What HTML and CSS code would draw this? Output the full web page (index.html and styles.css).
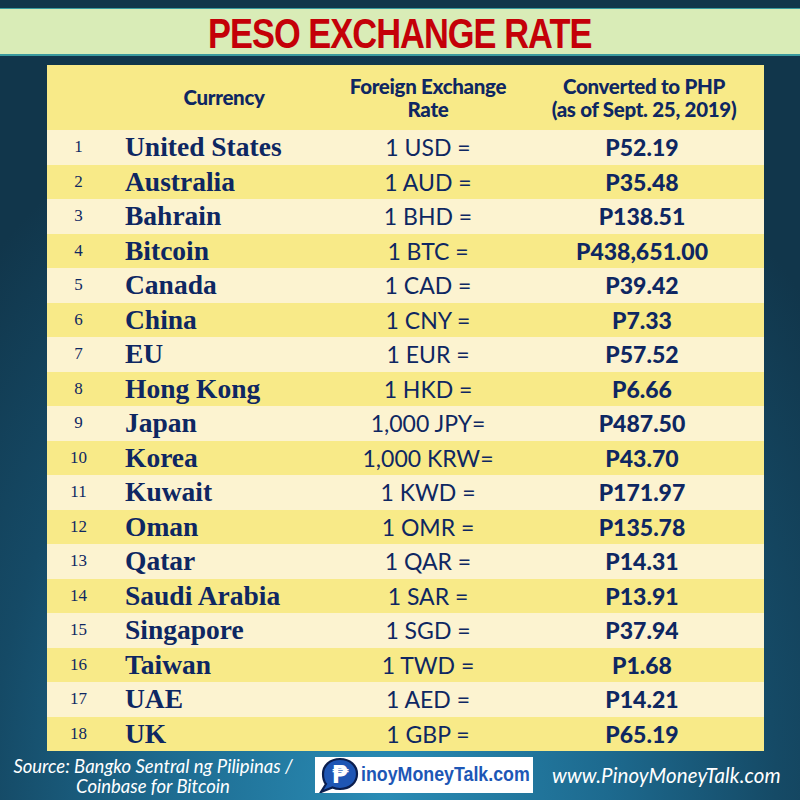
FILE: index.html
```html
<!DOCTYPE html>
<html>
<head>
<meta charset="utf-8">
<link rel="stylesheet" href="styles.css">
</head>
<body>
<div class="page">
  <header class="titlebar"><h1 class="title">PESO EXCHANGE RATE</h1></header>
  <section class="table">
    <div class="row head">
      <div class="hcell"></div>
      <div class="hcell">Currency</div>
      <div class="hcell">Foreign Exchange<br>Rate</div>
      <div class="hcell hphp">Converted to PHP<br>(as of Sept. 25, 2019)</div>
    </div>
    <div class="row light"><div class="c-num">1</div><div class="c-name">United States</div><div class="c-rate">1 USD =</div><div class="c-php">P52.19</div></div>
    <div class="row dark"><div class="c-num">2</div><div class="c-name">Australia</div><div class="c-rate">1 AUD =</div><div class="c-php">P35.48</div></div>
    <div class="row light"><div class="c-num">3</div><div class="c-name">Bahrain</div><div class="c-rate">1 BHD =</div><div class="c-php">P138.51</div></div>
    <div class="row dark"><div class="c-num">4</div><div class="c-name">Bitcoin</div><div class="c-rate">1 BTC =</div><div class="c-php">P438,651.00</div></div>
    <div class="row light"><div class="c-num">5</div><div class="c-name">Canada</div><div class="c-rate">1 CAD =</div><div class="c-php">P39.42</div></div>
    <div class="row dark"><div class="c-num">6</div><div class="c-name">China</div><div class="c-rate">1 CNY =</div><div class="c-php">P7.33</div></div>
    <div class="row light"><div class="c-num">7</div><div class="c-name">EU</div><div class="c-rate">1 EUR =</div><div class="c-php">P57.52</div></div>
    <div class="row dark"><div class="c-num">8</div><div class="c-name">Hong Kong</div><div class="c-rate">1 HKD =</div><div class="c-php">P6.66</div></div>
    <div class="row light"><div class="c-num">9</div><div class="c-name">Japan</div><div class="c-rate">1,000 JPY=</div><div class="c-php">P487.50</div></div>
    <div class="row dark"><div class="c-num">10</div><div class="c-name">Korea</div><div class="c-rate">1,000 KRW=</div><div class="c-php">P43.70</div></div>
    <div class="row light"><div class="c-num">11</div><div class="c-name">Kuwait</div><div class="c-rate">1 KWD =</div><div class="c-php">P171.97</div></div>
    <div class="row dark"><div class="c-num">12</div><div class="c-name">Oman</div><div class="c-rate">1 OMR =</div><div class="c-php">P135.78</div></div>
    <div class="row light"><div class="c-num">13</div><div class="c-name">Qatar</div><div class="c-rate">1 QAR =</div><div class="c-php">P14.31</div></div>
    <div class="row dark"><div class="c-num">14</div><div class="c-name">Saudi Arabia</div><div class="c-rate">1 SAR =</div><div class="c-php">P13.91</div></div>
    <div class="row light"><div class="c-num">15</div><div class="c-name">Singapore</div><div class="c-rate">1 SGD =</div><div class="c-php">P37.94</div></div>
    <div class="row dark"><div class="c-num">16</div><div class="c-name">Taiwan</div><div class="c-rate">1 TWD =</div><div class="c-php">P1.68</div></div>
    <div class="row light"><div class="c-num">17</div><div class="c-name">UAE</div><div class="c-rate">1 AED =</div><div class="c-php">P14.21</div></div>
    <div class="row dark"><div class="c-num">18</div><div class="c-name">UK</div><div class="c-rate">1 GBP =</div><div class="c-php">P65.19</div></div>
  </section>
  <footer class="footer">
    <div class="source">Source: Bangko Sentral ng Pilipinas /<br>Coinbase for Bitcoin</div>
    <div class="logo">
      <svg class="bubble" width="44" height="36" viewBox="0 0 44 36">
        <path d="M23 2 C33 2 40 8.5 40 17 C40 25.5 33 32 23 32 C20 32 17.5 31.4 15.5 30.5 L4 35 L9 27 C6.5 24.3 6 21 6 17 C6 8.5 13 2 23 2 Z" fill="#1f56b4" stroke="#0b1e4e" stroke-width="2.2"/>
        <text x="23" y="26" text-anchor="middle" class="peso">₱</text>
      </svg>
      <span class="logotext">inoyMoneyTalk.com</span>
    </div>
    <div class="site">www.PinoyMoneyTalk.com</div>
  </footer>
</div>
</body>
</html>
```
FILE: styles.css
```css
* { box-sizing: border-box; }
html, body { margin: 0; padding: 0; }
body {
  width: 800px;
  height: 800px;
  overflow: hidden;
  background: radial-gradient(ellipse 70% 95% at 48% 100%, #2a8cb5 0%, #1d6a8f 40%, #154a66 70%, #11364b 100%);
  font-family: Lato, "Open Sans", sans-serif;
}
.page {
  display: flex;
  flex-direction: column;
  padding-top: 8px;
  height: 800px;
}
.titlebar {
  height: 48px;
  background: #d9ecb7;
  border-top: 1px solid #3a9a9e;
  border-bottom: 2px solid #3a9a9e;
  display: flex;
  align-items: center;
  justify-content: center;
}
.title {
  margin: 0;
  font-family: "Liberation Sans", sans-serif;
  font-weight: 700;
  font-size: 43px;
  line-height: 1;
  letter-spacing: -1.2px;
  color: #c40008;
  padding-top: 3px;
  transform: scaleX(0.8);
  white-space: nowrap;
}
.table {
  margin: 9px 36px 0 47px;
  display: flex;
  flex-direction: column;
}
.row {
  display: grid;
  grid-template-columns: 65px 224px 184px 1fr;
  align-items: center;
  height: 34.5px;
  color: #0e2762;
}
.row.head { height: 65px; background: #f8ea88; }
.row.light { background: #fcf3d0; }
.row.dark { background: #f8ea88; }
.hcell {
  font-family: Lato, sans-serif;
  font-weight: 900;
  font-size: 20.5px;
  line-height: 23px;
  text-align: center;
  white-space: nowrap;
  letter-spacing: -0.3px;
}
.hphp { padding-left: 4px; }
.c-num {
  font-family: "Liberation Serif", serif;
  font-size: 17px;
  text-align: center;
  padding-right: 2px;
}
.c-name {
  font-family: "Liberation Serif", serif;
  font-weight: 700;
  font-size: 27.5px;
  padding-left: 13px;
  white-space: nowrap;
}
.c-rate {
  font-size: 23px;
  text-align: center;
  white-space: nowrap;
}
.c-php {
  font-weight: 900;
  font-size: 23px;
  text-align: center;
  white-space: nowrap;
}
.footer {
  flex: 1;
  display: flex;
  align-items: center;
  color: #ffffff;
  padding-bottom: 2px;
}
.source {
  width: 306px;
  flex-shrink: 0;
  text-align: center;
  font-style: italic;
  font-size: 18.5px;
  line-height: 20px;
  padding-top: 2px;
  white-space: nowrap;
}
.logo {
  flex-shrink: 0;
  margin-left: 9px;
  width: 218px;
  height: 36px;
  background: #ffffff;
  display: flex;
  align-items: center;
  padding-left: 2px;
  overflow: hidden;
}
.bubble { display: block; flex-shrink: 0; }
.peso {
  font-family: "DejaVu Sans", sans-serif;
  font-weight: 700;
  font-size: 24px;
  fill: #ffffff;
}
.logotext {
  display: inline-block;
  font-family: "Liberation Sans", Arial, sans-serif;
  font-weight: 700;
  font-size: 20px;
  color: #1d57b6;
  white-space: nowrap;
  transform: scaleX(0.89);
  transform-origin: left center;
}
.site {
  flex-shrink: 0;
  margin-left: 19px;
  font-style: italic;
  font-size: 20.5px;
  letter-spacing: 0.1px;
  white-space: nowrap;
}
```
